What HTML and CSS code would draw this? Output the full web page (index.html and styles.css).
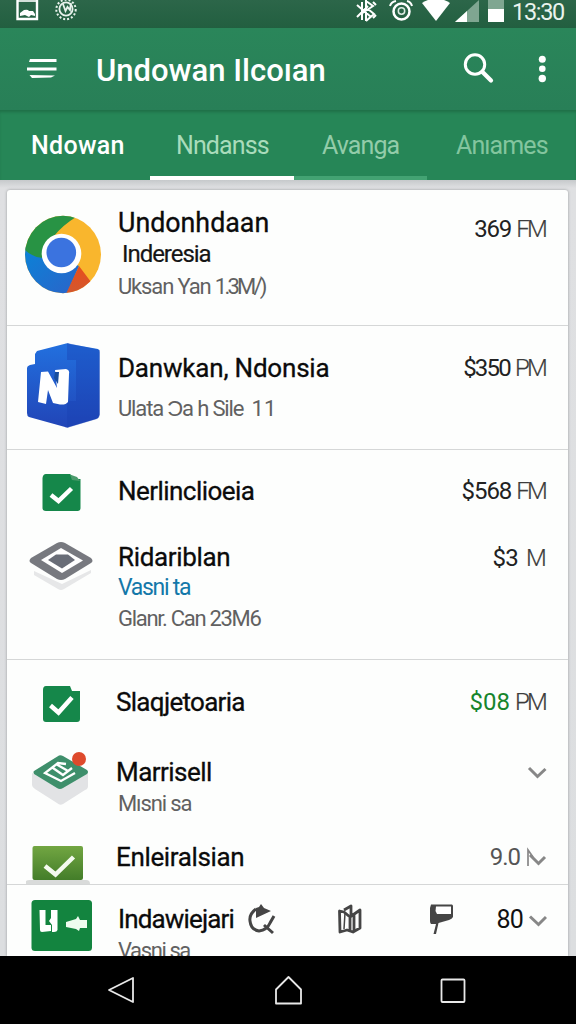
FILE: index.html
```html
<!DOCTYPE html>
<html lang="id">
<head>
<meta charset="utf-8">
<title>Undowan</title>
<link rel="stylesheet" href="styles.css">
</head>
<body>
<div class="screen">
  <header class="status">
    <svg class="status-left" width="64" height="28" viewBox="14 0 64 28" fill="none">
      <path d="M17.5 0V19H37V0" stroke="#fff" stroke-width="2.4"/><path d="M17 1H37" stroke="#fff" stroke-width="1.6"/>
      <path d="M20 16V13L24 10Q28 9 29 11L33 11L35 14V16L31 15L29 17L25 15Z" fill="#fff"/>
      <circle cx="66" cy="9.5" r="9.7" stroke="#e8f2ec" stroke-width="2" stroke-dasharray="2 2"/>
      <circle cx="66" cy="9" r="6.6" stroke="#e8f2ec" stroke-width="1.8"/>
      <path d="M63 4L65.500 11L67.500 7L70 10L71 3" stroke="#e8f2ec" stroke-width="1.8"/>
    </svg>
    <svg class="status-right" width="154" height="28" viewBox="354 0 154 28" fill="none">
      <path d="M357 5L371 17M357 17L368 6M366 0V21M366 1L373 6L361 14M366 21L374 14L368 9M373 2L376 5M373 18L376 15M362 2V20" stroke="#fff" stroke-width="2"/>
      <circle cx="401.500" cy="11.500" r="8" stroke="#fff" stroke-width="2.500"/><circle cx="401.500" cy="11" r="3.200" stroke="#dcebe2" stroke-width="1.500"/>
      <path d="M390 6Q391 2 396 1M407 1Q411 2 412 6" stroke="#fff" stroke-width="2"/>
      <path d="M422 3Q436 -6 450 3L436 21Z" fill="#fff"/>
      <path d="M479 0V22H455Z" fill="#7fa691"/><path d="M467 11V22H455Z" fill="#fff"/>
      <path d="M488 0H504V22H488Z" fill="#7fa691"/><path d="M488 9H504V22H488Z" fill="#fff"/>
    </svg>
    <span class="clock">13:30</span>
  </header>

  <div class="appbar">
    <svg width="34" height="26" viewBox="25 56 34 26" fill="#fff"><path d="M30 59H56.500V62H29ZM27 67.500H56.500V70.500H27ZM29.500 75L55 75.500L51 77.500L32 78Z"/></svg>
    <h1 class="title">Undowan Ilcoıan</h1>
    <svg class="search" width="34" height="34" viewBox="462 52 34 34" fill="none" stroke="#fff"><circle cx="475" cy="64.500" r="9.700" stroke-width="3"/><path d="M482.500 72L491 80.500" stroke-width="4.200" stroke-linecap="round"/></svg>
    <svg class="more" width="12" height="30" viewBox="536 54 12 30" fill="#fff"><circle cx="542.300" cy="59.300" r="3.500"/><circle cx="542.300" cy="68.800" r="3.300"/><circle cx="542.300" cy="78.500" r="3.700"/></svg>
  </div>

  <nav class="tabs">
    <span class="tab t1">Ndowan</span>
    <span class="tab t2">Nndanss</span>
    <span class="tab t3">Avanga</span>
    <span class="tab t4">Anıames</span>
  </nav>

  <main class="content">
    <div class="card">
      <section class="section">
        <article class="item chrome">
          <svg class="icon" viewBox="7 190 111 135">
            <defs>
              <linearGradient id="blue" x1="0" y1="0" x2="1" y2="1"><stop offset="0" stop-color="#0a83d8"/><stop offset="1" stop-color="#2c63c8"/></linearGradient>
              <linearGradient id="red" x1="0" y1="0" x2="0" y2="1"><stop offset="0" stop-color="#e84d1c"/><stop offset="1" stop-color="#cf5930"/></linearGradient>
              <clipPath id="disc"><ellipse cx="63" cy="254.500" rx="38" ry="38.700"/></clipPath>
            </defs>
            <g clip-path="url(#disc)">
              <path d="M24 214H102V295H24Z" fill="#f9b62d"/>
              <path d="M24 247L44 250L79 266L66 296H24Z" fill="url(#blue)"/>
              <path d="M24 214H76V217Q63 225 54 236Q44 245 43 258Q31 257 24 249Z" fill="#289344"/>
              <path d="M79 266L65 296H83L91 282Z" fill="url(#red)"/>
            </g>
            <circle cx="61.500" cy="253.500" r="19.800" fill="#fff"/><circle cx="61.300" cy="252.500" r="14.800" fill="#3b73df"/>
          </svg>
          <div class="body"><h2 class="name n1">Undonhdaan</h2><p class="sub inderesia">Inderesia</p><p class="meta m1">Uksan Yan <span class="size">1.3M/)</span></p></div>
          <div class="price"><span class="p1">369</span> <i>FM</i></div>
        </article>
      </section>

      <section class="section">
        <article class="item office">
          <svg class="icon" viewBox="7 326 111 123">
            <defs><linearGradient id="of" x1="0" y1="0" x2="0" y2="1"><stop offset="0" stop-color="#2270df"/><stop offset="1" stop-color="#2145b7"/></linearGradient></defs>
            <path d="M37 351L66 343.500Q68 343 70 344L98 349Q99.500 350 99.500 352V415Q99 418 96 419L69 427Q67 428 65 427L29 417Q27 416 27 413V368Q27 366 30 365L35 364V354Z" fill="url(#of)"/>
            <path d="M67 343V360H76V401H67V428L97 419Q100 417 100 414V350Z" fill="#183fb0" opacity=".38"/>
            <path d="M41 372L48 371.500L57 388L55 370L66 369Q70 370 69 374L68 402Q66 405 60 404.500L53 403L48 390L46 404L38 402Z" fill="#fff"/>
            <path d="M55 372L59 372L58 384L54 378Z" fill="#174d9e"/>
          </svg>
          <div class="body"><h2 class="name n2">Danwkan, Ndonsia</h2><p class="meta m2">Ulata Ɔa h Sile <span class="ones">11</span></p></div>
          <div class="price"><span class="p2">$350</span> <i>PM</i></div>
        </article>
      </section>

      <section class="section">
        <article class="item nerl">
          <svg class="icon" viewBox="7 450 111 78">
            <path d="M46 474H70L75 479L80.500 479V508Q80.500 511 77.500 511H46Q42.500 511 42.500 508V478Q43 474 46 474Z" fill="#15874a"/><path d="M70 474.500L77 477L80 481L72 480Z" fill="#4b9b6c"/>
            <path d="M51 495L58.500 501L71.500 488.500" fill="none" stroke="#fff" stroke-width="4.500"/>
          </svg>
          <div class="body"><h2 class="name n3">Nerlinclioeia</h2></div>
          <div class="price"><span class="p3">$568</span> <i>FM</i></div>
        </article>
        <article class="item rida">
          <svg class="icon" viewBox="7 528 111 131">
            <path d="M34 571L62 584L91 570L91 573L64 589Q61 591 58 589L34 575Z" fill="#e6e7e8"/>
            <path d="M31 558L57 543Q61 541 65 543L91 558Q94 561 91 563L65 579Q61 581 57 579L31 563Q28 561 31 558Z" fill="#77797f"/>
            <path d="M41 560L61 548L83 560.500L62 573Z" fill="#fff"/><path d="M48 560L56 554.500H68L75 560L62 568.500Z" fill="#696d77"/>
          </svg>
          <div class="body"><h2 class="name n4">Ridariblan</h2><p class="link">Vasni ta</p><p class="meta m4">Glanr. Can 23M6</p></div>
          <div class="price p4"><span>$3</span> <i>M</i></div>
        </article>
      </section>

      <section class="section">
        <article class="item slag">
          <svg class="icon" viewBox="7 660 111 78">
            <path d="M46 686H70L72 691H80V719Q80 722 77 722H46Q43 722 43 719V690Q43 686 46 686Z" fill="#15874a"/>
            <path d="M50.500 705.500L58.500 712.500L72 697.500" fill="none" stroke="#fff" stroke-width="4.500"/>
          </svg>
          <div class="body"><h2 class="name n5">Slaqjetoaria</h2></div>
          <div class="price"><b>$08</b> <i>PM</i></div>
        </article>
        <article class="item marr">
          <svg class="icon" viewBox="7 738 111 91">
            <path d="M32 773L60 789L88 773V786Q88 789 85 790L63 804Q60 806 57 803L35 789Q32 787 32 785Z" fill="#e2e3e5"/>
            <path d="M34 771L59 755.500Q61 755 63 756L87 770Q89 772 87 774L63 788Q60 790 57 788L34 774Q33 772 34 771Z" fill="#3e8f6b"/>
            <path d="M66 764L58 763L45 773L61 781L75 773M53 768L63 775L72 768M56 764L68 771" fill="none" stroke="#fff" stroke-width="2.300"/>
            <circle cx="79" cy="759" r="7" fill="#de4a2c"/>
          </svg>
          <div class="body"><h2 class="name n6">Marrisell</h2><p class="meta m6">Mısni sa</p></div>
          <svg class="chev" viewBox="528 762 20 20"><path d="M530 768L538.500 776.500L546.500 769"/></svg>
        </article>
        <article class="item enle">
          <svg class="icon" viewBox="7 829 111 55">
            <defs><linearGradient id="gr" x1="0" y1="0" x2="0" y2="1"><stop offset="0" stop-color="#72a642"/><stop offset="1" stop-color="#437d29"/></linearGradient></defs>
            <path d="M26 884V881Q27 880 30 880H86Q90 880 90 884Z" fill="#d9dbda"/><rect x="32.500" y="846" width="50.500" height="34" rx="2" fill="url(#gr)"/>
            <path d="M45 866L55.500 874.500L73.500 857" fill="none" stroke="#f4faef" stroke-width="4.500"/>
          </svg>
          <div class="body"><h2 class="name n7">Enleiralsian</h2></div>
          <div class="price p7"><span>9.0</span></div>
          <svg class="chev" viewBox="526 847 22 20"><path class="thin" d="M529 866V850L534 857"/><path d="M531 855L539.500 863.500L546 857"/></svg>
        </article>
      </section>

      <section class="section last">
        <article class="item inda">
          <svg class="icon" viewBox="7 885 111 71">
            <rect x="31.500" y="900" width="60.500" height="51" rx="3.500" fill="#13843f"/>
            <path d="M39.500 910H45.500V925H51V931L42 932Q40 932 40 930Z" fill="#fff"/>
            <path d="M51 910H57.500V930Q57 932 54 932L52 932V925L49 921L51 918Z" fill="#fff"/>
            <path d="M66 922L76 919L78 916L80 920H87V928H80L79 931L76 929L66 927Z" fill="#effcef"/>
          </svg>
          <div class="body"><h2 class="name n8">Indawiejari</h2><p class="meta m8">Vasni sa</p></div>
          <div class="actions">
            <svg width="30" height="34" viewBox="247 903 30 34" fill="none" stroke="#454545"><path d="M256 909Q249 914 250 921Q251 930 259 931Q267 930 270 923L274 916M264 925L273 933" stroke-width="3"/><path d="M256 908L259 907L261 904L264 908L271 911L256 918Z" fill="#454545" stroke="none"/></svg>
            <svg width="26" height="34" viewBox="337 903 26 34" fill="none" stroke="#454545" stroke-width="2.800" stroke-linejoin="round"><path d="M339.500 911L344 912L350 917L360 910V928L353 932L347 930L340 932ZM350 917V930M354 915V931M344 910L351 906V915"/><path d="M345 913L344 929" stroke-width="1.500"/></svg>
            <svg width="28" height="34" viewBox="428 903 28 34"><path d="M431 904.500H452Q453 905 453 906V917Q452 919 449 920L438.500 923L436 934H433.500L436 924H431Q430 923 430 921V908Z" fill="#454545"/><path d="M436 906.500H451V914H437L435.500 911Z" fill="#fff"/></svg>
          </div>
          <div class="price strong"><span>80</span></div>
          <svg class="chev" viewBox="528 910 20 20"><path d="M531 916.500L539.500 924.500L547 917"/></svg>
        </article>
      </section>
    </div>
  </main>

  <footer class="navbar">
    <svg width="30" height="30" viewBox="106 977 30 30"><path d="M109 992L133 980V1004Z"/></svg>
    <svg width="30" height="32" viewBox="272 975 30 32"><path d="M275 1004.500V990.500L287.500 978L300 990.500V1004.500Z"/></svg>
    <svg width="28" height="30" viewBox="440 977 28 30"><rect x="441.500" y="981.500" width="23" height="22.500" rx="1"/></svg>
  </footer>
</div>
</body>
</html>
```
FILE: styles.css
```css
* { box-sizing: border-box; margin: 0; }
body { font-family: Roboto, "Liberation Sans", sans-serif; background: #000; }
svg { display: block; flex: none; }

.screen { width: 576px; height: 1024px; display: flex; flex-direction: column; overflow: hidden; }

.status { height: 28px; display: flex; padding-left: 14px; background: linear-gradient(#2c6649, #225f40); flex: none; }
.status-right { margin-left: 276px; }
.clock { margin-left: 4px; font-size: 23.500px; line-height: 24px; color: #e9f3ed; white-space: nowrap; letter-spacing: -1.3px; }

.appbar { height: 82px; flex: none; display: flex; align-items: center; padding: 0 28px 0 25px; background: linear-gradient(#2a865a, #287f57); color: #fff; }
.title { font-size: 31px; font-weight: 500; line-height: 36px; margin: 3px 0 0 37px; white-space: nowrap; width: 366px; }
.more { margin-left: 40px; }

.tabs { height: 70px; flex: none; display: grid; grid-template-columns: 150px 144px 133px 149px; background: #268657; box-shadow: inset 0 3px 3px -1px #1f7047; }
.tab { font-size: 25px; line-height: 72px; white-space: nowrap; color: #a9dcbb; border-bottom: 4px solid transparent; height: 70px; letter-spacing: -.9px; }
.tab.t1 { font-weight: 500; color: #fff; padding-left: 31px; letter-spacing: .3px; }
.tab.t2 { border-bottom-color: #fff; padding-left: 26px; }
.tab.t3 { border-bottom-color: #43a373; padding-left: 28px; color: #93cca9; }
.tab.t4 { padding-left: 29px; color: #83c59e; }

.content { flex: 1; min-height: 0; padding: 10px 8px 0 7px; background: linear-gradient(#c6c9cb, #dfe0e2 8px, #dcdee0); overflow: hidden; }
.card { background: #fdfefd; border-radius: 3px 3px 0 0; box-shadow: 0 0 3px #96999b; }
.section { border-bottom: 1px solid #d5d7d7; }
.section.last { border-bottom: 0; }

.item { display: flex; align-items: flex-start; overflow: hidden; padding-right: 21px; }
.icon { width: 111px; height: 100%; }
.body { flex: 1; min-width: 0; white-space: nowrap; }
.name { font-size: 26px; font-weight: 400; line-height: 30px; color: #0b0b0b; -webkit-text-stroke: .3px #0b0b0b; }
.sub { font-size: 24px; line-height: 32px; color: #151515; -webkit-text-stroke: .2px #151515; }
.meta { font-size: 22px; line-height: 33px; color: #616161; }
.link { font-size: 23px; line-height: 31px; color: #1478a9; letter-spacing: -1.3px; }
.price { font-size: 24px; line-height: 30px; color: #222; white-space: nowrap; letter-spacing: -.8px; }
.price i { font-style: normal; color: #3c3c3c; font-weight: 300; letter-spacing: -2.8px; margin-right: 2px; -webkit-text-stroke: .2px #3c3c3c; }
.price b { font-weight: 400; color: #16852c; letter-spacing: 0; }
.chev { width: 20px; height: 20px; fill: none; stroke: #878787; stroke-width: 3; }
.thin { stroke-width: 1.7; }

.n1 { font-size: 26.800px; }
.n2 { letter-spacing: -.2px; }
.n3 { letter-spacing: -.55px; }
.n4 { letter-spacing: -.35px; }
.n5 { letter-spacing: -.7px; margin-left: -2px; }
.n6 { letter-spacing: -.55px; margin-left: -2px; }
.n7 { letter-spacing: -.35px; margin-left: -2px; }
.n8 { letter-spacing: -.85px; }
.inderesia { padding-left: 4px; letter-spacing: -1.05px; }
.m1 { letter-spacing: -1.15px; }
.size { letter-spacing: -2.800px; }
.m2 { margin-top: 9px; letter-spacing: -1.150px; }
.m4 { letter-spacing: -1.3px; line-height: 31px; }
.m6 { letter-spacing: -1.1px; }
.m8 { letter-spacing: -1.4px; }
.ones { margin-left: 4px; letter-spacing: 0; }
.p1 { letter-spacing: -1.2px; }
.p2 { letter-spacing: -1.8px; }
.p3 { letter-spacing: -1.1px; }

.chrome { height: 135px; }
.chrome .body { padding-top: 18px; }
.chrome .price { padding-top: 24px; }
.office { height: 123px; }
.office .body, .office .price { padding-top: 27px; }
.nerl { height: 78px; }
.nerl .body, .nerl .price { padding-top: 26px; }
.rida { height: 131px; }
.rida .body { padding-top: 14px; }
.rida .price { padding-top: 15px; word-spacing: 3px; }
.rida .price i { margin-right: 3px; }
.slag { height: 78px; }
.slag .body, .slag .price { padding-top: 27px; }
.marr { height: 91px; }
.marr .body { padding-top: 19px; }
.marr .chev { margin-top: 24px; }
.enle { height: 55px; }
.enle .body, .enle .price { padding-top: 13px; }
.enle .chev { margin: 18px 0 0 5px; width: 22px; }
.p7 { color: #555; letter-spacing: -1px; }
.inda { height: 71px; }
.inda .body { padding-top: 19px; flex: none; width: 129px; }
.inda .price { padding-top: 20px; margin-left: auto; }
.inda .chev { margin: 25px 0 0 4px; }
.actions { display: flex; padding-top: 18px; }
.actions svg + svg { margin-left: 60px; }
.actions svg + svg + svg { margin-left: 65px; }
.price.strong { color: #111; font-size: 25px; }

.navbar { height: 68px; flex: none; background: #000; display: flex; padding-left: 106px; align-items: center; gap: 137px; }
.navbar svg { fill: none; stroke: #e8e8e8; stroke-width: 1.8; stroke-linejoin: round; }
```
